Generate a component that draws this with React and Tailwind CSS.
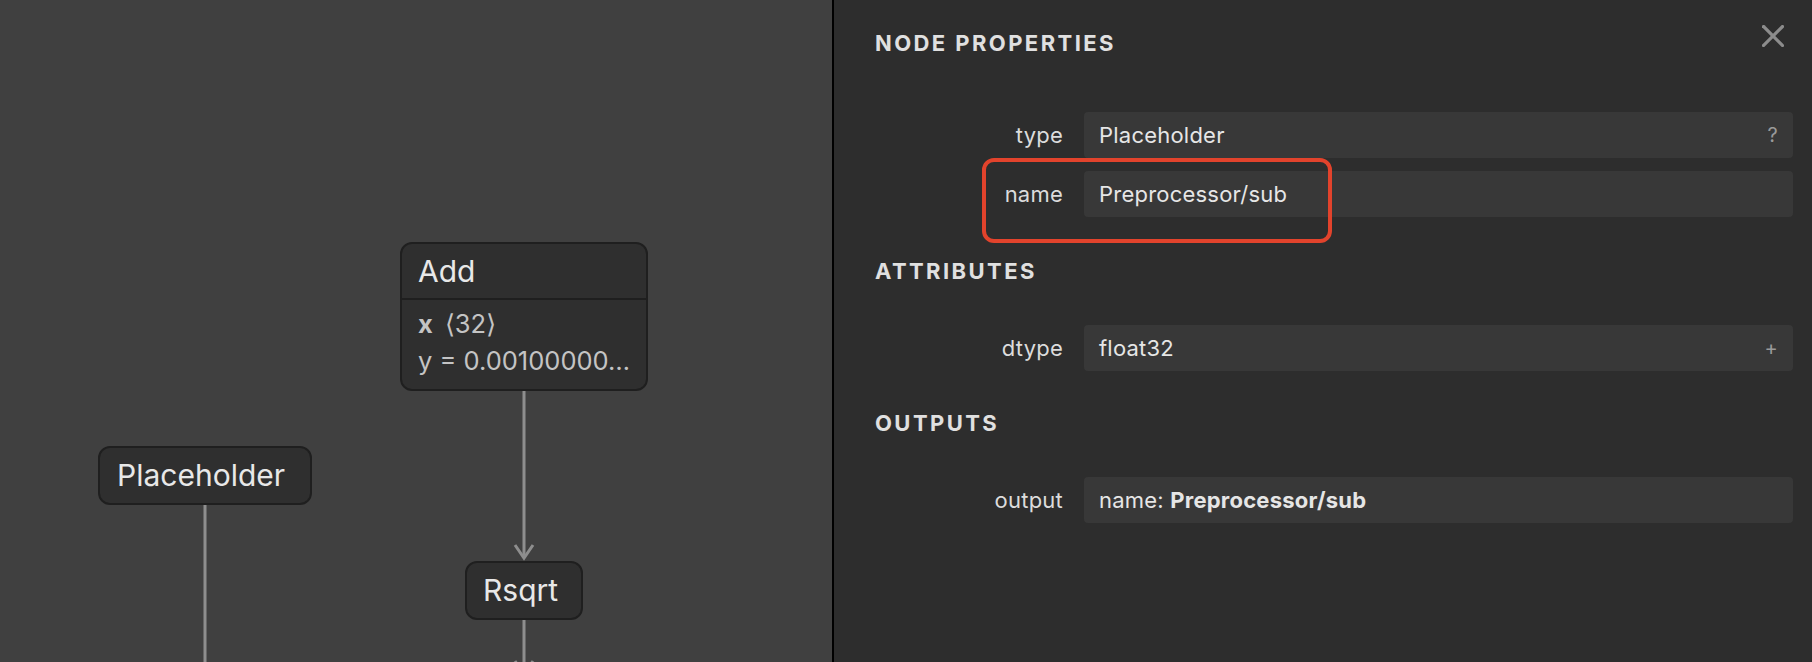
const FONT = { fontFamily: 'Inter, "Noto Sans", sans-serif' }

function GraphNode({ left, top, width, height, children }) {
  return (
    <div
      className="absolute rounded-[12px] border-2 border-[#1f1f1f] bg-[#2f2f2f] text-[#e8e8e8]"
      style={{ left, top, width, height }}
    >
      {children}
    </div>
  )
}

function Edges() {
  return (
    <svg className="absolute inset-0" width="832" height="662" viewBox="0 0 832 662">
      <g stroke="#8e8e8e" strokeWidth="3" fill="none" strokeLinejoin="miter">
        <line x1="524" y1="391" x2="524" y2="557" />
        <polyline points="515,545 524,558 533,545" />
        <line x1="205" y1="505" x2="205" y2="662" />
        <line x1="524" y1="620" x2="524" y2="674" />
        <polyline points="515,661 524,674 533,661" />
      </g>
    </svg>
  )
}

function Row({ label, children, extra, highlight }) {
  return (
    <div className="relative flex items-center gap-[21px]">
      <div className="w-[188px] text-right text-[22px] tracking-[0.01em] text-[#dcdcdc]">{label}</div>
      <div className="flex h-[46px] flex-1 items-center justify-between rounded-[4px] bg-[#383838] pl-[15px] pr-[15px] text-[22px] tracking-[0.01em] text-[#e6e6e6]">
        <span>{children}</span>
        {extra && <span className="text-[20px] text-[#9a9a9a]">{extra}</span>}
      </div>
      {highlight && (
        <div className="pointer-events-none absolute left-[107px] top-[-13px] h-[85px] w-[350px] rounded-[12px] border-4 border-[#e2432c]" />
      )}
    </div>
  )
}

function Section({ title }) {
  return (
    <h2 className="text-[22px] font-bold uppercase tracking-[0.11em] text-[#e0e0e0]">{title}</h2>
  )
}

export default function App() {
  return (
    <div className="flex h-[662px] w-[1812px] overflow-hidden" style={FONT}>
      {/* graph canvas */}
      <div className="relative h-full w-[832px] shrink-0 overflow-hidden bg-[#404040]">
        <Edges />
        <GraphNode left={400} top={242} width={248} height={149}>
          <div className="flex h-[56px] items-center border-b-2 border-[#1f1f1f] pl-[16px] text-[30px]">Add</div>
          <div className="pl-[16px] pt-[5px] text-[25.5px] leading-[37px] text-[#c4c4c4]">
            <div>
              <span className="font-bold">x</span>
              <span className="ml-[12px]">⟨32⟩</span>
            </div>
            <div className="whitespace-nowrap">y = 0.00100000…</div>
          </div>
        </GraphNode>
        <GraphNode left={98} top={446} width={214} height={59}>
          <div className="flex h-full items-center pl-[17px] text-[30px]">Placeholder</div>
        </GraphNode>
        <GraphNode left={465} top={561} width={118} height={59}>
          <div className="flex h-full items-center pl-[16px] text-[30px]">Rsqrt</div>
        </GraphNode>
      </div>

      <div className="w-[2px] shrink-0 bg-black" />

      {/* properties panel */}
      <div className="relative flex-1 bg-[#2d2d2d] pl-[41px] pr-[19px] pt-[27px]">
        <button className="absolute right-[28px] top-[25px]">
          <svg width="22" height="22" viewBox="0 0 22 22" stroke="#8c8c8c" strokeWidth="3.2" strokeLinecap="square">
            <line x1="1.5" y1="1.5" x2="20.5" y2="20.5" />
            <line x1="20.5" y1="1.5" x2="1.5" y2="20.5" />
          </svg>
        </button>
        <Section title="Node Properties" />
        <div className="mt-[52px] flex flex-col gap-[13px]">
          <Row label="type" extra="?">Placeholder</Row>
          <Row label="name" highlight>Preprocessor/sub</Row>
        </div>
        <div className="mt-[38px]">
          <Section title="Attributes" />
        </div>
        <div className="mt-[37px]">
          <Row label="dtype" extra="+">float32</Row>
        </div>
        <div className="mt-[36px]">
          <Section title="Outputs" />
        </div>
        <div className="mt-[37px]">
          <Row label="output">
            name: <span className="font-bold">Preprocessor/sub</span>
          </Row>
        </div>
      </div>
    </div>
  )
}
